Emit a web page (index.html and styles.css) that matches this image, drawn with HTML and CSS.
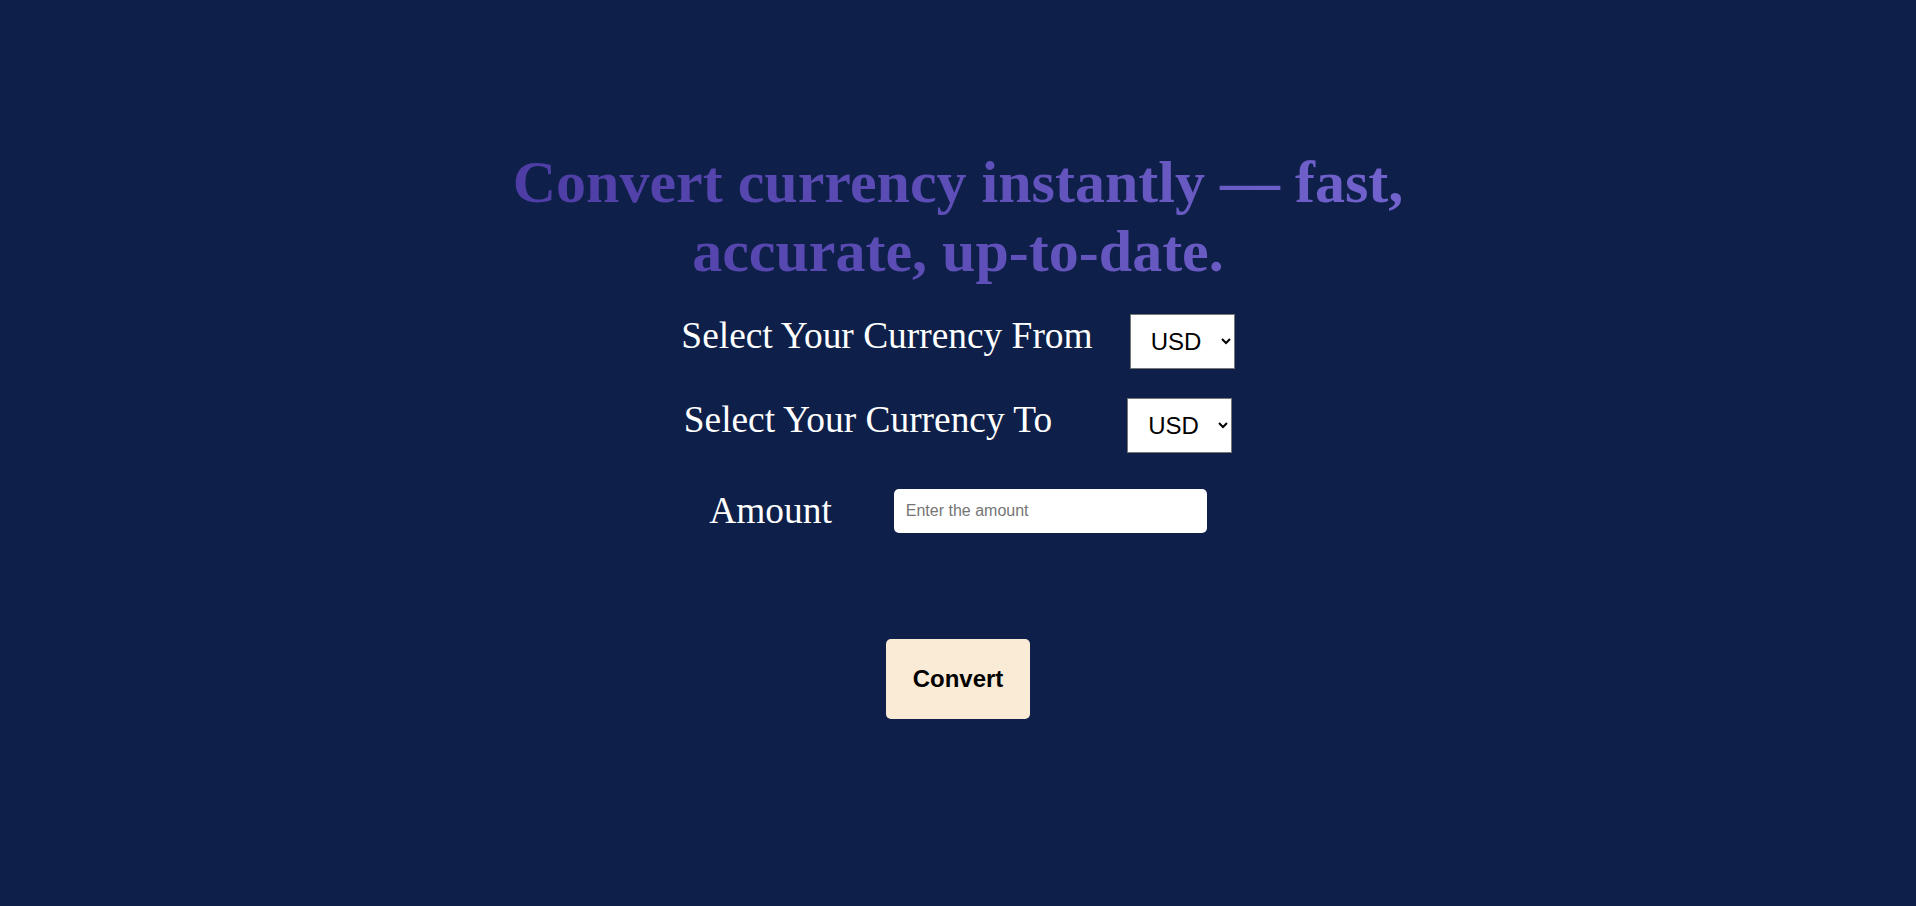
FILE: index.html
```html
<!DOCTYPE html>
<html lang="en">
<head>
<meta charset="utf-8">
<title>Currency Converter</title>
<link rel="stylesheet" href="styles.css">
</head>
<body>
<main class="page">
  <h1 class="title"><span class="title-text">Convert currency instantly — fast, accurate, up-to-date.</span></h1>
  <div class="row row-from">
    <p class="label">Select Your Currency From</p>
    <select class="currency">
      <option>USD</option>
      <option>EUR</option>
      <option>GBP</option>
    </select>
  </div>
  <div class="row row-to">
    <p class="label">Select Your Currency To</p>
    <select class="currency">
      <option>USD</option>
      <option>EUR</option>
      <option>GBP</option>
    </select>
  </div>
  <div class="row row-amount">
    <p class="label">Amount</p>
    <input class="amount" type="text" placeholder="Enter the amount">
  </div>
  <div class="actions">
    <button class="convert" type="button">Convert</button>
  </div>
</main>
</body>
</html>
```
FILE: styles.css
```css
html, body {
  margin: 0;
  padding: 0;
}

body {
  background: #0e2049;
  min-height: 906px;
  font-family: "Liberation Serif", "Times New Roman", serif;
}

.page {
  padding-top: 148px;
  display: flex;
  flex-direction: column;
  align-items: center;
}

.title {
  margin: 0 0 28px;
  max-width: 960px;
  font-family: "Liberation Serif", "Times New Roman", serif;
  font-size: 60px;
  font-weight: bold;
  line-height: normal;
  text-align: center;
  background: linear-gradient(90deg, #4c3ba3 0%, #5e4fb8 50%, #7464cf 100%);
  -webkit-background-clip: text;
  background-clip: text;
  color: transparent;
}

.row {
  display: flex;
  align-items: flex-start;
  justify-content: center;
}

.row-from {
  gap: 37px;
  margin-bottom: 29px;
}

.row-to {
  gap: 75px;
  margin-bottom: 36px;
}

.row-amount {
  gap: 62px;
  margin-bottom: 106px;
}

.label {
  margin: 0;
  color: #ffffff;
  font-family: "Liberation Serif", "Times New Roman", serif;
  font-size: 37.4px;
  line-height: normal;
}

.currency {
  box-sizing: border-box;
  width: 105px;
  height: 55px;
  padding: 0 8px 0 16px;
  font-family: "Liberation Sans", Arial, sans-serif;
  font-size: 24px;
  color: #000000;
  background-color: #ffffff;
  border: 1px solid #767676;
  border-radius: 0;
}

.amount {
  box-sizing: border-box;
  width: 313px;
  height: 44px;
  padding: 0 12px;
  font-family: "Liberation Sans", Arial, sans-serif;
  font-size: 16px;
  border: none;
  border-radius: 5px;
  background: #ffffff;
  color: #000000;
}

.amount::placeholder {
  color: #757575;
}

.actions {
  display: flex;
  justify-content: center;
}

.convert {
  box-sizing: border-box;
  width: 144px;
  height: 80px;
  padding: 0;
  font-family: "Liberation Sans", Arial, sans-serif;
  font-size: 24px;
  font-weight: bold;
  color: #000000;
  background: #faebd7;
  border: none;
  border-radius: 5px;
}
```
